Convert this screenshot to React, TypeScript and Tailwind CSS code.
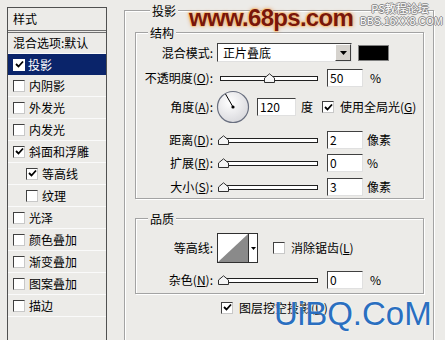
import React from "react";

const font = "font-['Noto_Sans_CJK_SC','Noto_Sans',sans-serif]";

function Check({ on = false, light = false }: { on?: boolean; light?: boolean }) {
  return (
    <div
      className={`w-[12px] h-[12px] shrink-0 bg-white border ${
        light ? "border-white" : "border-t-[#404040] border-l-[#404040] border-b-[#c8c8c8] border-r-[#c8c8c8]"
      } flex items-center justify-center`}
    >
      {on && (
        <svg width="9" height="9" viewBox="0 0 9 9">
          <path d="M1 4 L3.5 6.5 L8 1.5" fill="none" stroke="#000" strokeWidth="1.8" />
        </svg>
      )}
    </div>
  );
}

function Field({ value, w = "w-[36px]" }: { value: string; w?: string }) {
  return (
    <div
      className={`${w} h-[18px] bg-white border border-t-[#404040] border-l-[#404040] border-b-[#e0e0e0] border-r-[#e0e0e0] pl-[2px] text-[12px] leading-[16px] text-black`}
    >
      {value}
    </div>
  );
}

function Slider({ pos }: { pos: number }) {
  return (
    <div className="relative w-[98px] h-[12px] flex items-center">
      <div className="w-full h-[5px] bg-white border border-[#202020]" />
      <svg
        className="absolute top-[1px]"
        style={{ left: pos - 5 }}
        width="11"
        height="10"
        viewBox="0 0 11 10"
      >
        <path d="M0.5 9.5 V5 L5.5 0.8 L10.5 5 V9.5 Z" fill="#f4f4f4" stroke="#303030" />
      </svg>
    </div>
  );
}

function Label({ children }: { children: React.ReactNode }) {
  return <div className="w-[77px] shrink-0 text-right text-[12px] text-black">{children}</div>;
}

function Legend({ children, ml = "ml-[12px]" }: { children: React.ReactNode; ml?: string }) {
  return (
    <div className={`-mt-[8px] ${ml} w-fit px-[2px] h-[15px] leading-[15px] bg-[#ecebe8] text-[12px] text-black`}>
      {children}
    </div>
  );
}

const groupBox = "border border-[#a3a3a3] shadow-[inset_1px_1px_0_#fff,1px_1px_0_#fff]";

const styles: { name: string; on: boolean; sub?: boolean }[] = [
  { name: "内阴影", on: false },
  { name: "外发光", on: false },
  { name: "内发光", on: false },
  { name: "斜面和浮雕", on: true },
  { name: "等高线", on: true, sub: true },
  { name: "纹理", on: false, sub: true },
  { name: "光泽", on: false },
  { name: "颜色叠加", on: false },
  { name: "渐变叠加", on: false },
  { name: "图案叠加", on: false },
  { name: "描边", on: false },
];

export default function App() {
  return (
    <div className={`relative w-[445px] h-[340px] overflow-hidden bg-[#ecebe8] flex items-start ${font}`}>
      {/* Style list */}
      <div className="ml-[7px] mt-[7px] w-[100px] h-[350px] shrink-0 border border-[#505050] bg-[#ecebe8]">
        <div className="h-[22px] pl-[5px] flex items-center text-[12px] text-black">样式</div>
        <div className="h-[3px] border-y border-[#707070]" />
        <div className="h-[21px] pl-[5px] flex items-center text-[12px] text-black border-b border-[#fafafa]">
          混合选项:默认
        </div>
        <div className="h-[21px] pl-[5px] flex items-center gap-[3px] bg-[#0a246a] text-[12px] text-white">
          <Check on light />
          投影
        </div>
        {styles.map((s) => (
          <div
            key={s.name}
            className={`h-[22px] ${s.sub ? "pl-[18px]" : "pl-[5px]"} flex items-center gap-[4px] text-[12px] text-black border-b border-[#fafafa]`}
          >
            <Check on={s.on} />
            {s.name}
          </div>
        ))}
      </div>

      {/* Drop shadow settings */}
      <div className={`ml-[17px] mt-[10px] w-[310px] pl-[10px] pb-[40px] ${groupBox}`}>
        <Legend ml="ml-[15px]">投影</Legend>

        <div className={`mt-[14px] w-[289px] pb-[2px] ${groupBox}`}>
          <Legend>结构</Legend>

          <div className="mt-[3px] h-[19px] flex items-center">
            <Label>混合模式:</Label>
            <div className="ml-[4px] w-[135px] h-[19px] bg-white border border-t-[#404040] border-l-[#404040] border-b-[#e0e0e0] border-r-[#e0e0e0] flex items-center justify-between">
              <span className="pl-[5px] text-[12px] text-black">正片叠底</span>
              <div className="w-[16px] h-[17px] bg-[#d6d3ce] border border-t-white border-l-white border-b-[#404040] border-r-[#404040] flex items-center justify-center">
                <svg width="7" height="4" viewBox="0 0 7 4">
                  <path d="M0 0 H7 L3.5 4 Z" fill="#000" />
                </svg>
              </div>
            </div>
            <div className="ml-[6px] w-[31px] h-[16px] bg-black border border-[#808080]" />
          </div>

          <div className="mt-[7px] h-[18px] flex items-center">
            <Label>
              不透明度(<u>O</u>):
            </Label>
            <div className="ml-[7px]">
              <Slider pos={49} />
            </div>
            <div className="ml-[9px]">
              <Field value="50" />
            </div>
            <span className="ml-[7px] text-[12px] text-black">%</span>
          </div>

          <div className="mt-[4px] h-[32px] flex items-center">
            <Label>
              角度(<u>A</u>):
            </Label>
            <svg className="ml-[3px]" width="34" height="34" viewBox="0 0 34 34">
              <defs>
                <radialGradient id="dial" cx="40%" cy="35%" r="70%">
                  <stop offset="0%" stopColor="#ffffff" />
                  <stop offset="100%" stopColor="#d8d8dc" />
                </radialGradient>
              </defs>
              <circle cx="17" cy="17" r="15.5" fill="url(#dial)" stroke="#6a7080" strokeWidth="1.2" />
              <line x1="17" y1="17" x2="9.5" y2="4" stroke="#000" strokeWidth="1" />
              <circle cx="17" cy="17" r="1.6" fill="#000" />
            </svg>
            <div className="ml-[7px]">
              <Field value="120" w="w-[39px]" />
            </div>
            <span className="ml-[5px] text-[12px] text-black">度</span>
            <div className="ml-[9px]">
              <Check on />
            </div>
            <span className="ml-[6px] text-[12px] text-black">
              使用全局光(<u>G</u>)
            </span>
          </div>

          {[
            { l: "距离", k: "D", v: "2", u: "像素", mt: "mt-[8px]" },
            { l: "扩展", k: "R", v: "0", u: "%", mt: "mt-[5px]" },
            { l: "大小", k: "S", v: "3", u: "像素", mt: "mt-[6px]" },
          ].map((r) => (
            <div key={r.l} className={`${r.mt} h-[18px] flex items-center`}>
              <Label>
                {r.l}(<u>{r.k}</u>):
              </Label>
              <div className="ml-[7px]">
                <Slider pos={3} />
              </div>
              <div className="ml-[9px]">
                <Field value={r.v} />
              </div>
              <span className="ml-[4px] text-[12px] text-black">{r.u}</span>
            </div>
          ))}
        </div>

        <div className={`mt-[19px] w-[289px] pb-[4px] ${groupBox}`}>
          <Legend>品质</Legend>

          <div className="mt-[7px] h-[30px] flex items-center">
            <Label>等高线:</Label>
            <div className="ml-[4px] h-[30px] flex border border-[#303030]">
              <svg width="30" height="28" viewBox="0 0 30 28">
                <rect width="30" height="28" fill="#fff" />
                <path d="M0 28 L30 0 V28 Z" fill="#8a8a8a" />
              </svg>
              <div className="w-[9px] border-l border-[#303030] bg-white flex items-center justify-center">
                <svg width="5" height="3" viewBox="0 0 5 3">
                  <path d="M0 0 H5 L2.5 3 Z" fill="#000" />
                </svg>
              </div>
            </div>
            <div className="ml-[15px]">
              <Check />
            </div>
            <span className="ml-[6px] text-[12px] text-black">
              消除锯齿(<u>L</u>)
            </span>
          </div>

          <div className="mt-[8px] h-[18px] flex items-center">
            <Label>
              杂色(<u>N</u>):
            </Label>
            <div className="ml-[7px]">
              <Slider pos={3} />
            </div>
            <div className="ml-[9px]">
              <Field value="0" />
            </div>
            <span className="ml-[7px] text-[12px] text-black">%</span>
          </div>
        </div>

        <div className="mt-[7px] h-[13px] ml-[86px] flex items-center gap-[6px]">
          <Check on />
          <span className="text-[12px] text-black">
            图层挖空投影(<u>U</u>)
          </span>
        </div>
      </div>

      {/* Watermarks */}
      <div className="absolute left-[189px] top-[0px] font-['Liberation_Sans',sans-serif] font-bold text-[24px] tracking-[-0.7px] text-[#7a160a] [text-shadow:1px_0_0_#f6c98c,-1px_0_0_#f6c98c,0_1px_0_#f6c98c,0_-1px_0_#f6c98c,0_0_4px_#e09050]">
        www.68ps.com
      </div>
      <div className="absolute left-[360px] top-[2px] w-[80px] text-[11px] leading-[13px] text-white text-center [text-shadow:1px_0_0_#888,-1px_0_0_#888,0_1px_0_#888,0_-1px_0_#888]">
        <div>PS教程论坛</div>
        <div className="font-['Liberation_Sans',sans-serif] text-[10px] tracking-[0.3px]">BBS.16XX8.COM</div>
      </div>
      <div className="absolute left-[274px] top-[294px] font-['Liberation_Sans',sans-serif] text-[33px] leading-[40px] text-[#2a6fc0] [text-shadow:0_0_2px_#fff]">
        UiBQ.CoM
      </div>
    </div>
  );
}
